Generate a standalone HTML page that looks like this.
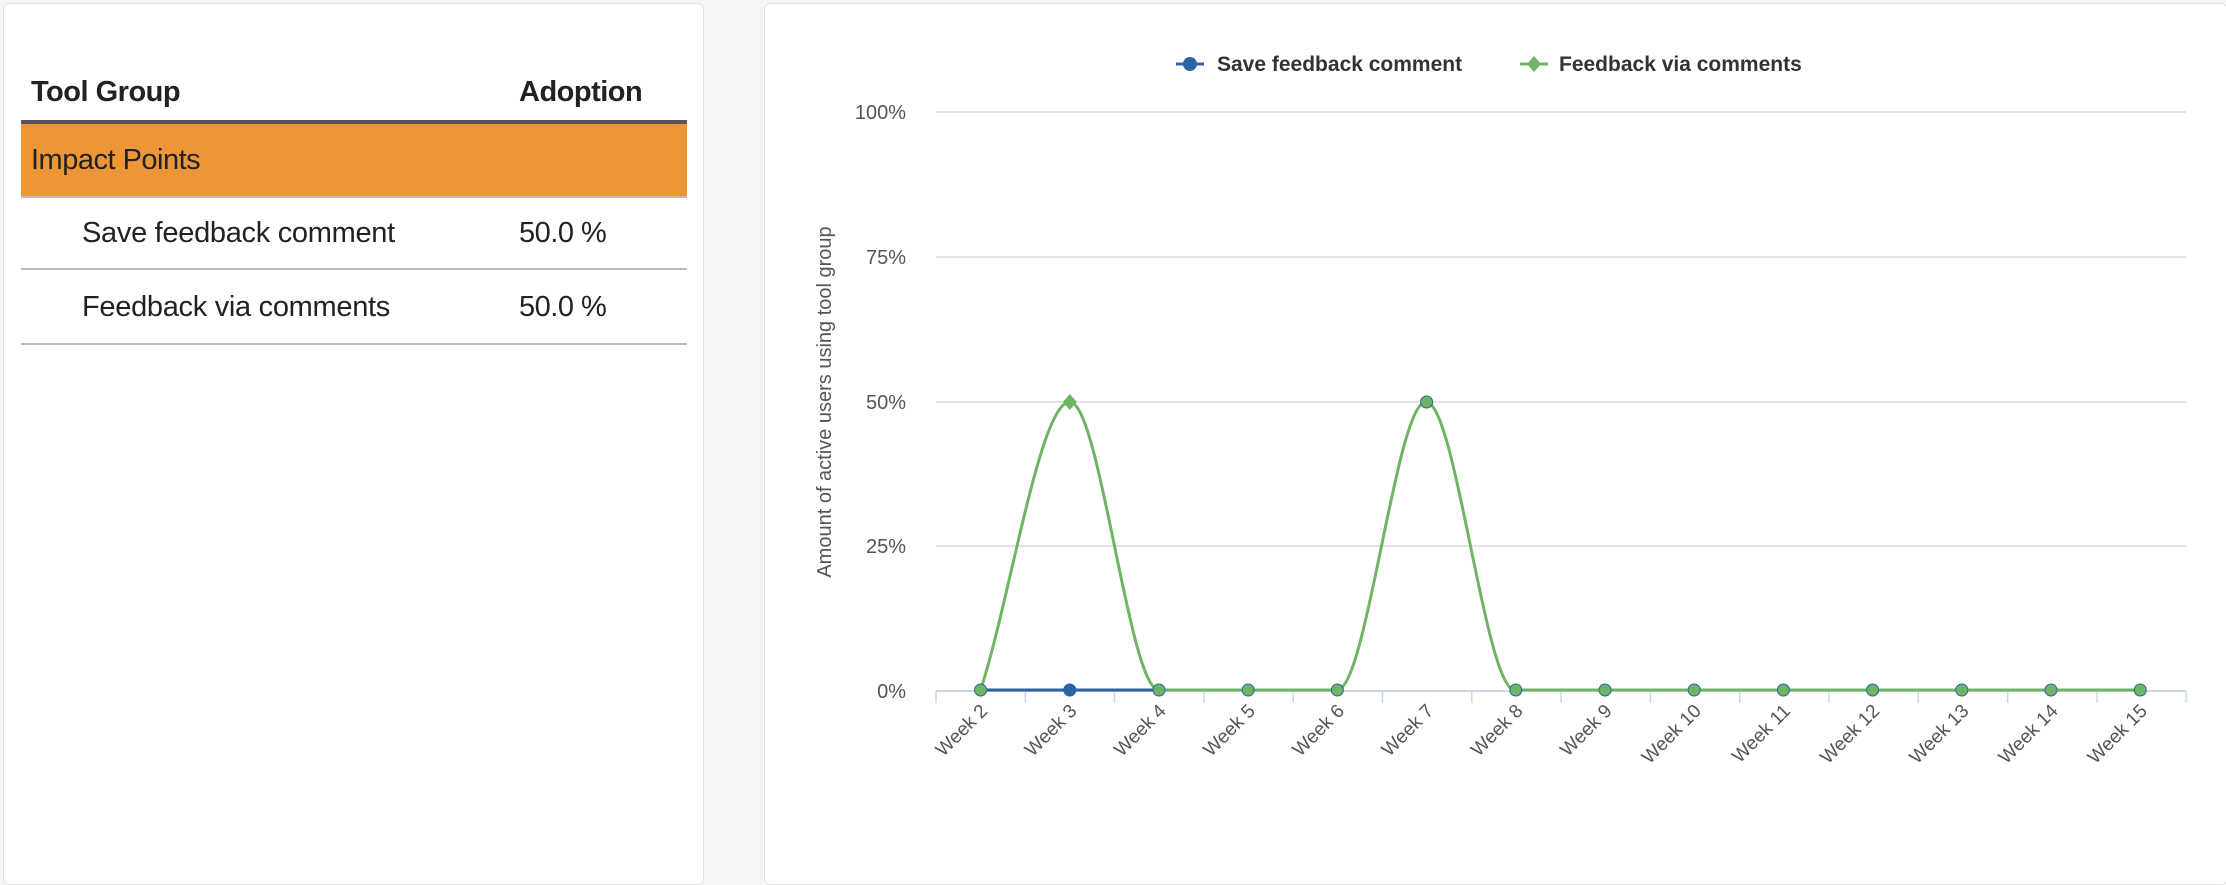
<!DOCTYPE html>
<html><head><meta charset="utf-8"><style>
body{margin:0;width:2226px;height:878px;background:#f5f5f5;font-family:"Liberation Sans",sans-serif;position:relative;overflow:hidden}
.panel{position:absolute;background:#fff;border:1px solid #e2e2e2;border-radius:7px}
.t{position:absolute;color:#222;font-size:29px;white-space:nowrap;line-height:34px}
</style></head><body>
<div class="panel" style="left:3px;top:3px;width:699px;height:880px"></div>
<div class="panel" style="left:764px;top:3px;width:1462px;height:880px"></div>

<div class="t" style="left:31px;top:75px;font-weight:bold;letter-spacing:-0.5px">Tool Group</div>
<div class="t" style="left:519px;top:75px;font-weight:bold;letter-spacing:-0.5px">Adoption</div>
<div style="position:absolute;left:21px;top:120px;width:666px;height:4px;background:#555"></div>
<div style="position:absolute;left:21px;top:124px;width:666px;height:72px;background:#EC9638"></div>
<div style="position:absolute;left:21px;top:196px;width:666px;height:2px;background:#bbb"></div>
<div class="t" style="left:31px;top:143px;letter-spacing:-0.5px">Impact Points</div>
<div class="t" style="left:82px;top:216px;letter-spacing:-0.3px">Save feedback comment</div>
<div class="t" style="left:519px;top:216px;letter-spacing:-0.5px">50.0 %</div>
<div style="position:absolute;left:21px;top:268px;width:666px;height:2px;background:#bbb"></div>
<div class="t" style="left:82px;top:290px;letter-spacing:-0.3px">Feedback via comments</div>
<div class="t" style="left:519px;top:290px;letter-spacing:-0.5px">50.0 %</div>
<div style="position:absolute;left:21px;top:343px;width:666px;height:2px;background:#bbb"></div>

<svg style="position:absolute;left:0;top:0" width="2226" height="878" font-family="Liberation Sans, sans-serif">
<g font-size="21" font-weight="bold" fill="#333">
<line x1="1176" y1="64" x2="1204" y2="64" stroke="#2b64a0" stroke-width="3"/><circle cx="1190" cy="64" r="7" fill="#2b64a0"/>
<text x="1217" y="71">Save feedback comment</text>
<line x1="1520" y1="64" x2="1548" y2="64" stroke="#6db562" stroke-width="3"/><path d="M1534 56 L1541 64 L1534 72 L1527 64Z" fill="#6db562"/>
<text x="1559" y="71">Feedback via comments</text>
</g>
<g stroke="#e3e3e3" stroke-width="2">
<line x1="936" y1="112" x2="2186" y2="112"/><line x1="936" y1="257" x2="2186" y2="257"/>
<line x1="936" y1="402" x2="2186" y2="402"/><line x1="936" y1="546" x2="2186" y2="546"/>
</g>
<line x1="936" y1="691" x2="2186" y2="691" stroke="#ccd6eb" stroke-width="2"/>
<g stroke="#ccd6eb" stroke-width="1.5" id="ticks"></g>
<g font-size="20" fill="#555" text-anchor="end">
<text x="906" y="119">100%</text><text x="906" y="264">75%</text><text x="906" y="409">50%</text><text x="906" y="553">25%</text><text x="906" y="698">0%</text>
</g>
<text transform="translate(831,402) rotate(-90)" text-anchor="middle" font-size="20" fill="#555">Amount of active users using tool group</text>
<g id="wk" font-size="19" fill="#555" text-anchor="end"></g>
<path d="M980.6 690 L1158.6 690" stroke="#2b64a0" stroke-width="3" fill="none"/>
<path d="M980.6 690 C1010 600 1040 402 1069.8 402 C1100 402 1129 690 1159 690 L1337 690 C1367 690 1396 402 1426 402 C1456 402 1485 690 1515 690 L2140 690" stroke="#6db562" stroke-width="3" fill="none"/>
<g id="mk"></g>
</svg>
<script>
var NS="http://www.w3.org/2000/svg";
var t=document.getElementById('ticks'),w=document.getElementById('wk'),m=document.getElementById('mk');
for(var k=0;k<=14;k++){var x=936+k*89.3;var l=document.createElementNS(NS,'line');l.setAttribute('x1',x);l.setAttribute('x2',x);l.setAttribute('y1',691);l.setAttribute('y2',703);t.appendChild(l);}
for(var i=0;i<14;i++){var cx=980.6+i*89.2;
var tx=document.createElementNS(NS,'text');tx.setAttribute('transform','translate('+(cx+8)+',712) rotate(-45)');tx.textContent='Week '+(i+2);w.appendChild(tx);
var y=(i==5)?402:690;
var c=document.createElementNS(NS,'circle');c.setAttribute('cx',cx);c.setAttribute('cy',y);c.setAttribute('r',6.5);c.setAttribute('fill','#2b64a0');m.appendChild(c);
if(i==1){var p=document.createElementNS(NS,'path');p.setAttribute('d','M'+cx+' 394 L'+(cx+7)+' 402 L'+cx+' 410 L'+(cx-7)+' 402Z');p.setAttribute('fill','#6db562');m.appendChild(p);}
else{var g=document.createElementNS(NS,'circle');g.setAttribute('cx',cx);g.setAttribute('cy',y);g.setAttribute('r',5.5);g.setAttribute('fill','#6db562');m.appendChild(g);}
}
</script>
</body></html>
